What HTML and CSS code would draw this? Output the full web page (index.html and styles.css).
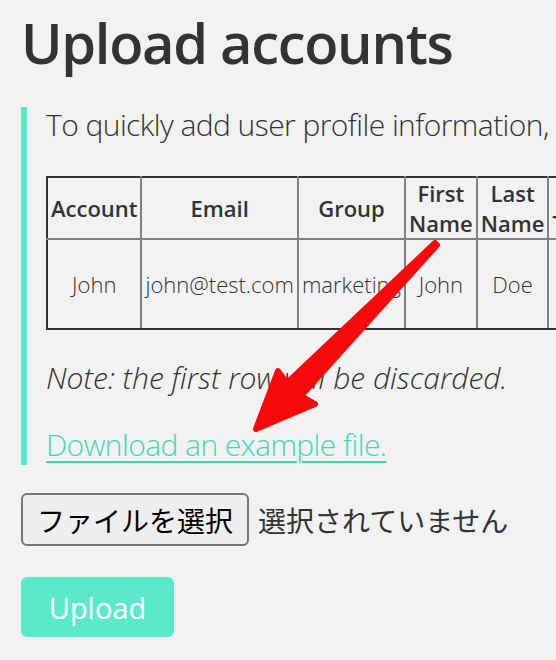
FILE: index.html
```html
<!DOCTYPE html>
<html lang="en">
<head>
<meta charset="utf-8">
<title>Upload accounts</title>
<link rel="stylesheet" href="styles.css">
</head>
<body>
<main class="page">
  <h1 class="title">Upload accounts</h1>
  <blockquote class="info">
    <p class="intro">To quickly add user profile information, upload a CSV file with the following columns:</p>
    <table class="sample">
      <thead>
        <tr>
          <th>Account</th>
          <th>Email</th>
          <th>Group</th>
          <th>First Name</th>
          <th>Last Name</th>
          <th>Job Title</th>
        </tr>
      </thead>
      <tbody>
        <tr>
          <td>John</td>
          <td>john@test.com</td>
          <td>marketing</td>
          <td>John</td>
          <td>Doe</td>
          <td>PR</td>
        </tr>
      </tbody>
    </table>
    <p class="note">Note: the first row will be discarded.</p>
    <p class="download"><a href="#" class="link">Download an example file.</a></p>
  </blockquote>
  <div class="file-row">
    <span class="file-btn">ファイルを選択</span>
    <span class="file-name">選択されていません</span>
  </div>
  <div class="actions">
    <span class="upload-btn">Upload</span>
  </div>
</main>
<svg class="arrow" width="556" height="660" viewBox="0 0 556 660" aria-hidden="true">
  <path d="M437 245 L301 396 L315 404 L256 429 L278 371 L287 383 L435 243 Z" fill="#f70a0a" stroke="#f70a0a" stroke-width="6" stroke-linejoin="round"/>
</svg>
</body>
</html>
```

FILE: styles.css
```css
html {
  overflow: hidden;
  background: #f2f2f2;
}
body {
  margin: 0;
  background: #f2f2f2;
  color: #333333;
  font-family: "Open Sans", "Noto Sans CJK JP", sans-serif;
  position: relative;
}
.page {
  width: 1300px;
  padding: 9px 0 0 21px;
}
.title {
  margin: 0;
  font-size: 56px;
  line-height: 67px;
  font-weight: 650;
  letter-spacing: -1.3px;
  color: #333333;
}
.info {
  margin: 31px 0 0 0;
  border-left: 6px solid #5ce8cb;
  padding: 0 0 2px 19px;
  font-size: 30px;
  line-height: 36px;
  font-weight: 300;
  letter-spacing: -0.56px;
}
.intro {
  margin: 0 0 33px 0;
  white-space: nowrap;
}
.sample {
  border-collapse: collapse;
  width: 1px;
  border: 2px solid #333333;
  font-size: 22px;
  line-height: 30px;
  text-align: center;
  letter-spacing: 0;
}
.sample th,
.sample td {
  border: 2px solid #808080;
  padding: 0 3px;
}
.sample th {
  font-weight: 600;
}
.sample td {
  font-weight: 300;
  padding: 29px 3px;
  white-space: nowrap;
}
.sample tr:first-child th {
  border-top-color: #333333;
}
.sample tbody tr:last-child td {
  border-bottom-color: #333333;
}
.sample th:first-child,
.sample td:first-child {
  border-left-color: #333333;
}
.note {
  margin: 30px 0 0 0;
  font-style: italic;
  letter-spacing: 0;
}
.download {
  margin: 31px 0 0 0;
}
.link {
  color: #48d5b5;
  text-decoration: underline;
  text-decoration-thickness: 2px;
  text-underline-offset: 5px;
}
.file-row {
  margin-top: 28px;
  display: flex;
  align-items: center;
  gap: 9px;
  font-family: "Noto Sans CJK JP", sans-serif;
  font-size: 28px;
}
.file-btn {
  box-sizing: border-box;
  height: 53px;
  display: flex;
  align-items: center;
  padding: 0 14px;
  border: 2px solid #767676;
  border-radius: 6px;
  background: #efefef;
  color: #000000;
}
.file-name {
  color: #333333;
}
.actions {
  margin-top: 31px;
  display: flex;
}
.upload-btn {
  box-sizing: border-box;
  width: 153px;
  height: 60px;
  display: flex;
  align-items: center;
  justify-content: center;
  background: #5be9cb;
  border-radius: 6px;
  color: #ffffff;
  font-size: 29px;
  font-weight: 400;
}
.arrow {
  position: absolute;
  left: 0;
  top: 0;
  pointer-events: none;
}
```
